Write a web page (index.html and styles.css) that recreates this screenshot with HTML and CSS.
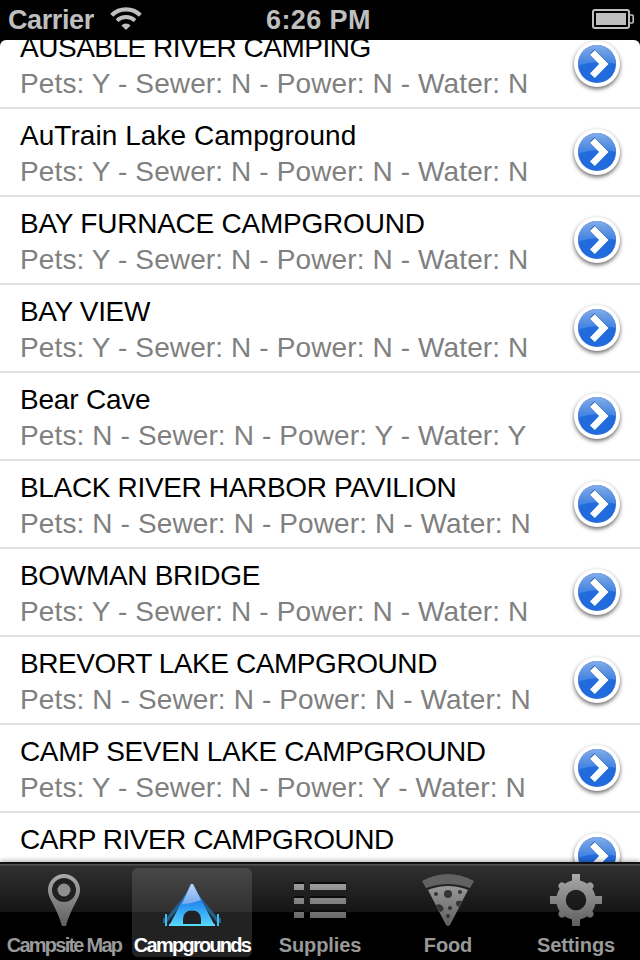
FILE: index.html
```
<!DOCTYPE html>
<html lang="en">
<head>
<meta charset="utf-8">
<title>Campgrounds</title>
<link rel="stylesheet" href="styles.css">
</head>
<body>
<svg class="defs" width="0" height="0" aria-hidden="true">
  <defs>
    <linearGradient id="blue" x1="0" y1="0" x2="0" y2="1"><stop offset="0" stop-color="#82ade9"/><stop offset="1" stop-color="#3b7de0"/></linearGradient>
    <linearGradient id="grey" gradientUnits="userSpaceOnUse" x1="0" y1="4" x2="0" y2="58"><stop offset="0" stop-color="#adadad"/><stop offset="1" stop-color="#5e5e5e"/></linearGradient>
    <linearGradient id="ice" x1="0" y1="0" x2="0" y2="1"><stop offset="0" stop-color="#bcd6f6"/><stop offset="1" stop-color="#74a9ee"/></linearGradient>
    <linearGradient id="aqua" gradientUnits="userSpaceOnUse" x1="0" y1="32" x2="0" y2="58"><stop offset="0" stop-color="#2080ef"/><stop offset="1" stop-color="#55d8ff"/></linearGradient>
    <symbol id="detail" viewBox="0 0 46 46">
      <circle cx="23" cy="23" r="23" fill="#fff"/>
      <circle cx="23" cy="23" r="19" fill="#216bdd"/>
      <path d="M4 23a19 19 0 0 1 38 0Q23 18 4 25z" fill="url(#blue)"/>
      <path d="M16.500 12.500l4-4 13.500 13.500" fill="none" stroke="#2a5fba" stroke-width="1"/>
      <path d="M16.200 13.700l4.800-4.500L34.500 23 20.800 37l-4.800-4.500L25 23z" fill="#fff"/>
    </symbol>
  </defs>
</svg>
<header class="status">
  <span class="carrier">Carrier</span>
  <svg class="wifi" width="32" height="24" viewBox="0 0 32 24" fill="none" stroke="#bfbfbf">
    <path d="M1.7 8.2a20.4 20.4 0 0 1 28.6 0" stroke-width="4.2"/>
    <path d="M7 13.6a13 13 0 0 1 18 0" stroke-width="3.8"/>
    <path d="M16 23l-4.6-4.6a6.6 6.6 0 0 1 9.2 0z" fill="#bfbfbf" stroke="none"/>
  </svg>
  <span class="time">6:26 PM</span>
  <svg class="battery" width="42" height="20" viewBox="0 0 42 20">
    <rect x="1" y="1" width="36" height="18" rx="2" fill="none" stroke="#bfbfbf" stroke-width="2"/>
    <rect x="4" y="4" width="30" height="12" fill="#bfbfbf"/>
    <path d="M38 6h2.2q1 0 1 1v6q0 1-1 1H38" fill="none" stroke="#bfbfbf" stroke-width="1.6"/>
  </svg>
</header>
<main class="list">
  <article class="row"><div class="text"><h2 class="t1">AUSABLE RIVER CAMPING</h2><p>Pets: Y - Sewer: N - Power: N - Water: N</p></div><svg class="go"><use href="#detail"/></svg></article>
  <article class="row"><div class="text"><h2 class="t2">AuTrain Lake Campground</h2><p>Pets: Y - Sewer: N - Power: N - Water: N</p></div><svg class="go"><use href="#detail"/></svg></article>
  <article class="row"><div class="text"><h2 class="t3">BAY FURNACE CAMPGROUND</h2><p>Pets: Y - Sewer: N - Power: N - Water: N</p></div><svg class="go"><use href="#detail"/></svg></article>
  <article class="row"><div class="text"><h2 class="t4">BAY VIEW</h2><p>Pets: Y - Sewer: N - Power: N - Water: N</p></div><svg class="go"><use href="#detail"/></svg></article>
  <article class="row"><div class="text"><h2 class="t5">Bear Cave</h2><p>Pets: N - Sewer: N - Power: Y - Water: Y</p></div><svg class="go"><use href="#detail"/></svg></article>
  <article class="row"><div class="text"><h2 class="t6">BLACK RIVER HARBOR PAVILION</h2><p>Pets: N - Sewer: N - Power: N - Water: N</p></div><svg class="go"><use href="#detail"/></svg></article>
  <article class="row"><div class="text"><h2 class="t7">BOWMAN BRIDGE</h2><p>Pets: Y - Sewer: N - Power: N - Water: N</p></div><svg class="go"><use href="#detail"/></svg></article>
  <article class="row"><div class="text"><h2 class="t8">BREVORT LAKE CAMPGROUND</h2><p>Pets: N - Sewer: N - Power: N - Water: N</p></div><svg class="go"><use href="#detail"/></svg></article>
  <article class="row"><div class="text"><h2 class="t9">CAMP SEVEN LAKE CAMPGROUND</h2><p>Pets: Y - Sewer: N - Power: Y - Water: N</p></div><svg class="go"><use href="#detail"/></svg></article>
  <article class="row"><div class="text"><h2 class="t10">CARP RIVER CAMPGROUND</h2></div><svg class="go"><use href="#detail"/></svg></article>
</main>
<nav class="tabs">
  <a class="tab"><svg viewBox="0 0 60 60"><path fill="url(#grey)" d="M30 6a16 16 0 0 1 16 16c0 9-8 15-14 36h-4C22 37 14 31 14 22A16 16 0 0 1 30 6z"/><circle cx="30" cy="22" r="12" fill="#202020"/><circle cx="30" cy="22" r="6.5" fill="#8e8e8e"/></svg><span class="l1">Campsite Map</span></a>
  <a class="tab on"><svg viewBox="0 0 60 60"><path d="M31 20L4 53M29 20l27 33" stroke="#245f8c" stroke-width="3.500"/><path d="M4 46v12M56 46v12" stroke="#3cbfe8" stroke-width="2"/><path d="M2 50v5M58 50v5" stroke="#245f8c" stroke-width="2"/><path d="M29 16h2L53 58H7z" fill="url(#aqua)"/><path d="M29 16h2l8 16q-10 4-19 4z" fill="url(#ice)"/><path d="M21 57v-5q0-9.500 9-9.500t9 9.500v5z" fill="#202225"/><path d="M7 57h46" stroke="#55dcff" stroke-width="2"/></svg><span class="l2">Campgrounds</span></a>
  <a class="tab"><svg viewBox="0 0 60 60"><path d="M4 15h10M20 15h36M4 29h10M20 29h36M4 43h10M20 43h36" stroke="#0b0b0b" stroke-width="2"/><path fill="url(#grey)" d="M4 16h10v6H4zM20 16h36v6H20zM4 30h10v6H4zM20 30h36v6H20zM4 44h10v6H4zM20 44h36v6H20z"/></svg><span class="l3">Supplies</span></a>
  <a class="tab"><svg viewBox="0 0 60 60"><path d="M4 13Q30-1 56 13l-4 7Q30 12 8 20z" fill="#626262"/><path d="M10 22q20-8 40 0L32 57q-2 2-4 0z" fill="url(#grey)"/><g fill="#353535"><circle cx="30" cy="26" r="4"/><circle cx="18" cy="26" r="2"/><circle cx="42" cy="24" r="2"/><path d="M18 37q5-2 7 2t-3 5zM44 33q-6-1-6 2t3 4z"/><circle cx="32" cy="40" r="2"/><circle cx="30" cy="48" r="2"/></g></svg><span class="l3">Food</span></a>
  <a class="tab"><svg viewBox="0 0 60 60"><g stroke="url(#grey)" fill="none"><path stroke-width="8" d="M30.010 6L30 15M30.010 49L30 58M4 32.010L14 32M46 32.010L56 32"/><path stroke-width="7" stroke-linecap="round" d="M16 18l4 4M40 42l4 4M44 18l-4 4M20 42l-4 4"/><circle cx="30" cy="32" r="15" stroke-width="9.500"/></g></svg><span class="l3">Settings</span></a>
</nav>
</body>
</html>
```
FILE: styles.css
```
* { box-sizing: border-box; }
body {
  margin: 0;
  width: 640px;
  height: 960px;
  overflow: hidden;
  display: flex;
  flex-direction: column;
  background: #000;
  font-family: "Liberation Sans", Arial, sans-serif;
}
.defs { position: absolute; }
.status {
  flex: 0 0 40px;
  display: grid;
  grid-template-columns: 102px 164px 326px 48px;
  align-items: start;
  padding-top: 5px;
  color: #bfbfbf;
  font-size: 27px;
  line-height: 30px;
  font-weight: bold;
  white-space: nowrap;
}
.carrier { padding-left: 8px; letter-spacing: -.4px; }
.wifi { margin: 2px 0 0 8px; }
.time { letter-spacing: .4px; }
.battery { margin-top: 4px; }
.list {
  flex: 0 0 822px;
  overflow: hidden;
  background: #fff;
  border-radius: 6px 6px 0 0;
}
.row {
  height: 88px;
  padding: 9px 20px 0;
  border-bottom: 2px solid #e0e0e0;
  display: flex;
  justify-content: space-between;
}
.row:first-child { margin-top: -19px; }
.row h2, .row p {
  margin: 0;
  font-size: 28px;
  line-height: 36px;
  font-weight: normal;
  white-space: nowrap;
  color: #000;
}
.row p { color: #808080; letter-spacing: .12px; }
.row .t1 { letter-spacing: -.48px; }
.row .t2 { letter-spacing: .05px; }
.row .t3 { letter-spacing: -.23px; }
.row .t4 { letter-spacing: -.35px; }
.row .t5 { letter-spacing: -.2px; }
.row .t6 { letter-spacing: -.34px; }
.row .t7 { letter-spacing: -.32px; }
.row .t8 { letter-spacing: -.43px; }
.row .t9 { letter-spacing: -.38px; }
.row .t10 { letter-spacing: -.48px; }
.go {
  width: 46px;
  height: 46px;
  margin-top: 11px;
  overflow: visible;
  filter: drop-shadow(0 2px 2px rgba(0, 0, 0, .6));
}
.tabs {
  flex: 0 0 98px;
  position: relative;
  display: grid;
  grid-template-columns: repeat(5, 128px);
  border-top: 2px solid #111;
  background: linear-gradient(#505050 0 1px, #303030 2px, #151515 48px, #000 48px);
  box-shadow: 0 -1px 5px rgba(0, 0, 0, .35);
}
.tab {
  display: flex;
  flex-direction: column;
  align-items: center;
  margin: 4px 4px 3px;
  color: #999;
  font-size: 20px;
  line-height: 22px;
  font-weight: bold;
  border-radius: 6px;
  white-space: nowrap;
}
.tab svg { width: 60px; height: 60px; flex: none; }
.tab span { margin-top: 6px; }
.on {
  color: #fff;
  background: linear-gradient(#484848, #303030 44px, #222 44px, #222);
}
.l1, .l2 { letter-spacing: -1.75px; }
.l3 { letter-spacing: -.1px; }
```
